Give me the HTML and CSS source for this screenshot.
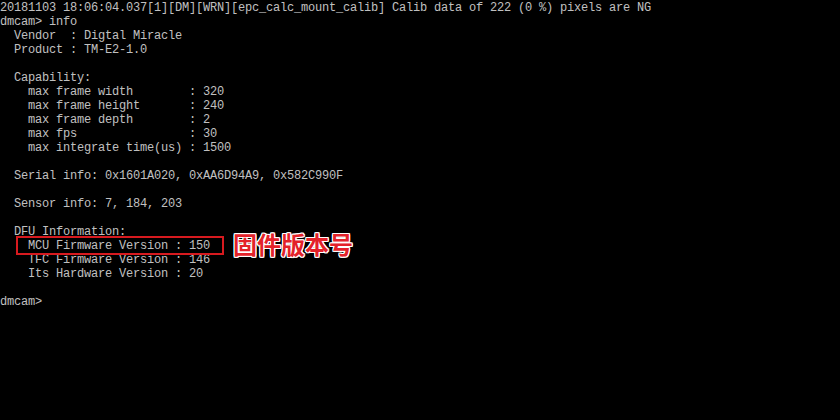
FILE: index.html
```html
<!DOCTYPE html>
<html lang="zh">
<head>
<meta charset="utf-8">
<title>dmcam info</title>
<link rel="stylesheet" href="styles.css">
</head>
<body>
<div class="term">
<pre class="out">20181103 18:06:04.037[1][DM][WRN][epc_calc_mount_calib] Calib data of 222 (0 %) pixels are NG
dmcam&gt; info
  Vendor  : Digtal Miracle
  Product : TM-E2-1.0

  Capability:
    max frame width        : 320
    max frame height       : 240
    max frame depth        : 2
    max fps                : 30
    max integrate time(us) : 1500

  Serial info: 0x1601A020, 0xAA6D94A9, 0x582C990F

  Sensor info: 7, 184, 203

  DFU Information:
    MCU Firmware Version : 150
    TFC Firmware Version : 146
    Its Hardware Version : 20

dmcam&gt;</pre>
<div class="mark"></div>
<div class="note">固件版本号</div>
</div>
</body>
</html>
```
FILE: styles.css
```css
html, body {
  margin: 0;
  padding: 0;
  background: #000;
}
.term {
  position: relative;
  width: 840px;
  height: 420px;
  background: #000;
}
.out {
  margin: 0;
  padding: 1px 0 0;
  font-family: "Liberation Mono", "DejaVu Sans Mono", monospace;
  font-size: 12px;
  letter-spacing: -0.2px;
  line-height: 14px;
  color: #c0c0c0;
  white-space: pre;
}
.mark {
  position: absolute;
  left: 16px;
  top: 236px;
  width: 208px;
  height: 19px;
  box-sizing: border-box;
  border: 2px solid #d71a1f;
}
.note {
  position: absolute;
  left: 233px;
  top: 231px;
  font-family: "Noto Sans CJK SC", sans-serif;
  font-weight: 700;
  font-size: 24px;
  line-height: 26px;
  color: #e3222a;
  text-shadow: 1px 0 0 #fff, -1px 0 0 #fff, 0 1px 0 #fff, 0 -1px 0 #fff,
               1px 1px 0 #fff, -1px -1px 0 #fff, 1px -1px 0 #fff, -1px 1px 0 #fff;
}
```
